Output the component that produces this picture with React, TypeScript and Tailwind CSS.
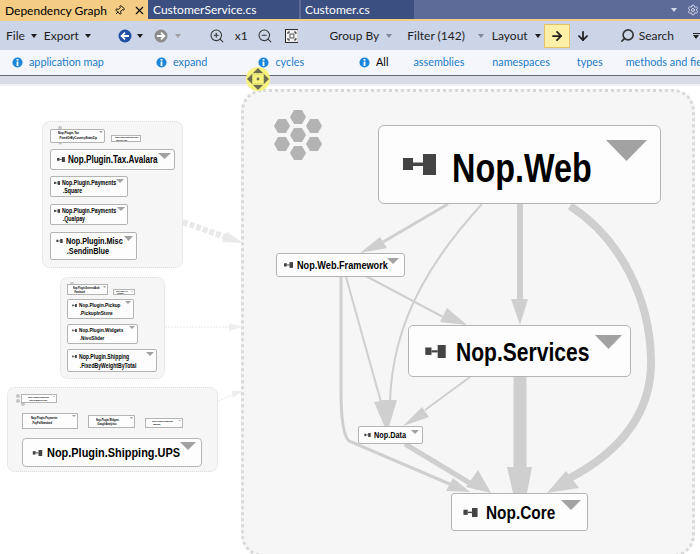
import React from 'react';
import { ArrowDown, ArrowRight, ZoomIn, ZoomOut, Search, Pin, X, Settings } from 'lucide-react';

const Caret = ({ className = 'border-t-[#1e1e1e]' }: { className?: string }) => (
  <span className={`inline-block h-0 w-0 border-x-[3.5px] border-t-[4px] border-x-transparent ${className}`} />
);

const Info = ({ className }: { className: string }) => (
  <svg viewBox="0 0 12 12" className={`h-[11px] w-[11px] shrink-0 ${className}`}>
    <circle cx="6" cy="6" r="5.5" fill="#1a86dc" />
    <rect x="5" y="2.2" width="2" height="1.8" fill="#fff" />
    <rect x="5" y="5" width="2" height="4.8" fill="#fff" />
  </svg>
);

const NavCircle = ({ fill, flip }: { fill: string; flip?: boolean }) => (
  <svg viewBox="0 0 14 14" className={`h-[14px] w-[14px] ${flip ? '-scale-x-100' : ''}`}>
    <circle cx="7" cy="7" r="6.5" fill={fill} />
    <path d="M11 7H4M7 3.6 3.6 7 7 10.4" fill="none" stroke="#fff" strokeWidth="1.8" />
  </svg>
);

const AsmIcon = ({ className }: { className: string }) => (
  <svg viewBox="0 0 33 21" className={`shrink-0 ${className}`}>
    <rect x="0" y="4" width="10" height="12" fill="#444" />
    <rect x="10" y="8.5" width="10" height="3.5" fill="#444" />
    <rect x="20" y="0" width="13" height="21" fill="#444" />
  </svg>
);

type NodeDef = {
  box: string;
  text: string;
  icon?: string;
  tri: string;
  lines: string[];
};

// positions on the graph canvas, in page pixels
const nodes: NodeDef[] = [
  { box: 'left-[378px] top-[125px] w-[283px] h-[79px] pl-[24px] gap-[16px] rounded-[6px]', text: 'text-[40px] leading-[46px] pt-[6px]', icon: 'w-[33px] h-[21px]', tri: 'right-[13px] top-[14px] w-[41px] h-[21px]', lines: ['Nop.Web'] },
  { box: 'left-[408px] top-[325px] w-[223px] h-[52px] pl-[16px] gap-[10px] rounded-[5px]', text: 'text-[26px] leading-[30px] pt-[2px]', icon: 'w-[21px] h-[13px]', tri: 'right-[8px] top-[9px] w-[27px] h-[14px]', lines: ['Nop.Services'] },
  { box: 'left-[451px] top-[493px] w-[137px] h-[38px] pl-[11px] gap-[8px] rounded-[3px]', text: 'text-[19px] leading-[22px] pt-[2px]', icon: 'w-[15px] h-[9px]', tri: 'right-[6px] top-[6px] w-[20px] h-[10px]', lines: ['Nop.Core'] },
  { box: 'left-[276px] top-[253px] w-[129px] h-[24px] pl-[7px] gap-[4px] rounded-[3px]', text: 'text-[11.3px] leading-[14px]', icon: 'w-[9px] h-[6px]', tri: 'right-[5px] top-[4px] w-[12px] h-[6px]', lines: ['Nop.Web.Framework'] },
  { box: 'left-[358px] top-[426px] w-[65px] h-[18px] pl-[5px] gap-[3px] rounded-[2px]', text: 'text-[9px] leading-[11px]', icon: 'w-[7px] h-[4px]', tri: 'right-[3px] top-[3px] w-[8px] h-[4px]', lines: ['Nop.Data'] },

  { box: 'left-[50px] top-[129px] w-[55px] h-[14px] pl-[7px] rounded-[2px]', text: 'text-[3.6px] leading-[5px]', tri: 'right-[1px] top-[1px] w-[4px] h-[2px]', lines: ['Nop.Plugin.Tax', '.FixedOrByCountryStateZip'] },
  { box: 'left-[111px] top-[135px] w-[30px] h-[7px] pl-[3px]', text: 'text-[2.4px] leading-[3px]', tri: 'right-[1px] top-[1px] w-[2px] h-[1px]', lines: ['Nop.Plugin.ExternalAuth', '.WeiXinAuth'] },
  { box: 'left-[50px] top-[149px] w-[125px] h-[21px] pl-[6px] gap-[3px] rounded-[3px]', text: 'text-[10px] leading-[11px]', icon: 'w-[8px] h-[5px]', tri: 'right-[3px] top-[3px] w-[13px] h-[6px]', lines: ['Nop.Plugin.Tax.Avalara'] },
  { box: 'left-[50px] top-[176px] w-[78px] h-[21px] pl-[3px] gap-[2px] rounded-[2px]', text: 'text-[6.5px] leading-[8px]', icon: 'w-[6px] h-[4px] -mt-[8px]', tri: 'right-[3px] top-[2px] w-[8px] h-[4px]', lines: ['Nop.Plugin.Payments', '.Square'] },
  { box: 'left-[50px] top-[204px] w-[78px] h-[21px] pl-[3px] gap-[2px] rounded-[2px]', text: 'text-[6.5px] leading-[8px]', icon: 'w-[6px] h-[4px] -mt-[8px]', tri: 'right-[2px] top-[2px] w-[8px] h-[4px]', lines: ['Nop.Plugin.Payments', '.Qualpay'] },
  { box: 'left-[50px] top-[232px] w-[87px] h-[28px] pl-[5px] gap-[3px] rounded-[2px]', text: 'text-[9px] leading-[10px]', icon: 'w-[7px] h-[4px] -mt-[10px]', tri: 'right-[3px] top-[3px] w-[9px] h-[5px]', lines: ['Nop.Plugin.Misc', '.SendinBlue'] },

  { box: 'left-[67px] top-[284px] w-[41px] h-[11px] pl-[5px]', text: 'text-[2.8px] leading-[4px]', tri: 'right-[1px] top-[1px] w-[3px] h-[2px]', lines: ['Nop.Plugin.ExternalAuth', '.Facebook'] },
  { box: 'left-[113px] top-[289px] w-[22px] h-[6px] pl-[2px]', text: 'text-[2px] leading-[2.5px]', tri: 'right-[1px] top-[1px] w-[2px] h-[1px]', lines: ['Nop.Plugin.Api', '.Sitemap'] },
  { box: 'left-[67px] top-[299px] w-[67px] h-[20px] pl-[4px] gap-[2px] rounded-[2px]', text: 'text-[5.8px] leading-[8px]', icon: 'w-[5px] h-[3px] -mt-[8px]', tri: 'right-[2px] top-[1px] w-[6px] h-[3px]', lines: ['Nop.Plugin.Pickup', '.PickupInStore'] },
  { box: 'left-[67px] top-[324px] w-[71px] h-[20px] pl-[4px] gap-[2px] rounded-[2px]', text: 'text-[5.8px] leading-[8px]', icon: 'w-[5px] h-[3px] -mt-[8px]', tri: 'right-[2px] top-[1px] w-[6px] h-[3px]', lines: ['Nop.Plugin.Widgets', '.NivoSlider'] },
  { box: 'left-[67px] top-[349px] w-[90px] h-[23px] pl-[4px] gap-[2px] rounded-[2px]', text: 'text-[6.3px] leading-[9px]', icon: 'w-[5px] h-[3px] -mt-[9px]', tri: 'right-[2px] top-[2px] w-[8px] h-[4px]', lines: ['Nop.Plugin.Shipping', '.FixedByWeightByTotal'] },

  { box: 'left-[21px] top-[394px] w-[36px] h-[9px] pl-[6px]', text: 'text-[2.5px] leading-[3px]', tri: 'right-[1px] top-[1px] w-[2px] h-[1px]', lines: ['Nop.Plugin.Payments', '.CheckMoneyOrder'] },
  { box: 'left-[22px] top-[413px] w-[56px] h-[16px] pl-[8px]', text: 'text-[3.2px] leading-[5px]', tri: 'right-[1px] top-[1px] w-[4px] h-[2px]', lines: ['Nop.Plugin.Payments', '.PayPalStandard'] },
  { box: 'left-[88px] top-[415px] w-[47px] h-[13px] pl-[7px]', text: 'text-[3px] leading-[4px]', tri: 'right-[1px] top-[1px] w-[3px] h-[2px]', lines: ['Nop.Plugin.Widgets', '.GoogleAnalytics'] },
  { box: 'left-[145px] top-[418px] w-[38px] h-[10px] pl-[6px]', text: 'text-[2.5px] leading-[3px]', tri: 'right-[1px] top-[1px] w-[3px] h-[1px]', lines: ['Nop.Plugin.Payments', '.Manual'] },
  { box: 'left-[22px] top-[438px] w-[180px] h-[29px] pl-[9px] gap-[4px] rounded-[4px]', text: 'text-[13.5px] leading-[16px]', icon: 'w-[11px] h-[6px]', tri: 'right-[5px] top-[3px] w-[16px] h-[8px]', lines: ['Nop.Plugin.Shipping.UPS'] },
];

const GraphNode = ({ n }: { n: NodeDef }) => (
  <div className={`absolute flex items-center border border-[#b4b4b4] bg-[#fdfdfd] ${n.box}`}>
    {n.icon && <AsmIcon className={n.icon} />}
    <div className={`origin-left scale-x-[.81] whitespace-pre font-bold text-black font-['Liberation_Sans',sans-serif] ${n.text}`}>
      {n.lines.map((l, i) => (
        <div key={l} className={i > 0 ? 'pl-[1px]' : ''}>{l}</div>
      ))}
    </div>
    <svg viewBox="0 0 10 5" preserveAspectRatio="none" className={`absolute ${n.tri}`}>
      <polygon points="0,0 10,0 5,5" fill="#a2a2a2" />
    </svg>
  </div>
);

const hexCenters = [
  [298, 117],
  [282, 126],
  [314, 126],
  [298, 135],
  [282, 144],
  [314, 144],
  [298, 153],
];

const Edges = () => (
  <svg viewBox="0 0 700 554" className="absolute inset-0 h-[554px] w-[700px]">
    <g fill="none" stroke="#cfcfcf">
      {/* from plugin groups */}
      <path d="M183 222 L228 238" stroke="#e9e9e9" strokeWidth="6" strokeDasharray="5 2" />
      <path d="M165 327 L230 327" stroke="#eeeeee" strokeWidth="1.5" strokeDasharray="2 1" />
      <path d="M218 401 L232 395" stroke="#eeeeee" strokeWidth="1.5" strokeDasharray="2 1" />

      <path d="M448 204 L383 242" strokeWidth="3" />
      <path d="M482 204 C440 250 391 315 390 405" strokeWidth="2" />
      <path d="M520 204 L520 302" strokeWidth="6" />
      <path d="M570 206 C620 238 650 298 651 360 C652 420 612 456 568 479" strokeWidth="8" />
      <path d="M520 377 L520 470" strokeWidth="13" />
      <path d="M364 275 L445 318" strokeWidth="2" />
      <path d="M346 277 L381 402" strokeWidth="2" />
      <path d="M341 277 L341 390 Q341 434 349 441 L452 485" strokeWidth="3" />
      <path d="M470 377 L425 410" strokeWidth="2" />
      <path d="M405 444 L478 488" strokeWidth="5" />
    </g>
    <g fill="#e9e9e9">
      <polygon points="243,243 222,242 227,232" />
      <polygon points="243,327 229,323 229,331" fill="#eeeeee" />
      <polygon points="243,391 231,391 233,398" fill="#eeeeee" />
    </g>
    <g fill="#cfcfcf">
      <polygon points="360,253 380,237 387,248" />
      <polygon points="511,299 528,299 520,325" />
      <polygon points="547,493 566,471 579,488" />
      <polygon points="507,467 532,467 527,493 513,493" />
      <polygon points="467,325 447,308 440,322" />
      <polygon points="386,430 374,402 392,400" />
      <polygon points="388,430 381,400 397,400" />
      <polygon points="403,426 422,407 429,417" />
      <polygon points="470,492 453,478 446,491" />
      <polygon points="491,493 478,470 466,487" />
    </g>
    {/* group glyph */}
    <g fill="#b3b3b3">
      {hexCenters.map(([x, y]) => (
        <polygon key={`${x}-${y}`} points={`${x - 8},${y} ${x - 4},${y - 7} ${x + 4},${y - 7} ${x + 8},${y} ${x + 4},${y + 7} ${x - 4},${y + 7}`} />
      ))}
    </g>
    <g fill="#c4c4c4">
      <circle cx="60" cy="128" r="2" />
      <circle cx="60" cy="143" r="1.6" />
      <circle cx="72" cy="284" r="2" />
      <circle cx="18" cy="396" r="2" />
      <circle cx="18" cy="401" r="2" />
      <circle cx="23" cy="404" r="2" />
    </g>
  </svg>
);

const groups = [
  'left-[42px] top-[121px] w-[141px] h-[147px]',
  'left-[60px] top-[277px] w-[105px] h-[102px]',
  'left-[7px] top-[387px] w-[211px] h-[85px]',
];

const PanControl = () => (
  <svg viewBox="0 0 24 24" className="absolute left-[246px] top-[67px] h-[24px] w-[24px]">
    <circle cx="12" cy="12" r="12" fill="#f6f27c" />
    <g fill="#6d6c55">
      <polygon points="12,1 17,6 7,6" />
      <polygon points="12,23 17,18 7,18" />
      <polygon points="1,12 6,7 6,17" />
      <polygon points="23,12 18,7 18,17" />
      <circle cx="12" cy="12" r="1.4" />
    </g>
    <rect x="6.5" y="7" width="11" height="10" fill="none" stroke="#c9c66a" strokeWidth="0.8" />
  </svg>
);

const linkClass = 'text-[#1b7cc8]';

export default function App() {
  return (
    <div className="relative flex h-[554px] w-[700px] flex-col overflow-hidden whitespace-nowrap bg-white text-[12px] text-[#1e1e1e] font-['Lato',sans-serif]">
      {/* document tabs */}
      <div className="flex h-[21px] shrink-0 items-start border-b-[2px] border-[#f5cc84] bg-[#5d6b99]">
        <div className="flex h-[21px] w-[148px] items-center bg-[#f5cc84] pl-[5px] text-black">
          <span className="w-[108px]">Dependency Graph</span>
          <Pin size={11} className="ml-[1px] rotate-45" />
          <X size={13} className="ml-[8px]" />
        </div>
        <div className="flex h-[19px] w-[151px] items-center bg-[#3b4f81] pl-[5px] text-white">CustomerService.cs</div>
        <div className="ml-[2px] flex h-[19px] w-[113px] items-center bg-[#3b4f81] pl-[4px] text-white">Customer.cs</div>
        <div className="ml-auto flex h-[19px] items-center">
          <Caret className="border-t-[#d5d9e8]" />
          <Settings size={12} className="ml-[10px] mr-[1px] text-[#d5d9e8]" />
        </div>
      </div>

      {/* toolbar */}
      <div className="flex h-[29px] shrink-0 items-center bg-[#ccd5e8] pl-[6px]">
        <span>File</span>
        <Caret className="ml-[6px] border-t-[#1e1e1e]" />
        <span className="ml-[7px]">Export</span>
        <Caret className="ml-[6px]" />
        <span className="ml-[27px] flex"><NavCircle fill="#1f4ea5" /></span>
        <Caret className="ml-[5px]" />
        <span className="ml-[11px] flex"><NavCircle fill="#8c8c8c" flip /></span>
        <Caret className="ml-[7px] border-t-[#a0a0a0]" />
        <ZoomIn size={16} className="ml-[28px] text-[#333]" strokeWidth={1.6} />
        <span className="ml-[10px]">x1</span>
        <ZoomOut size={16} className="ml-[9px] text-[#333]" strokeWidth={1.6} />
        <svg viewBox="0 0 14 14" className="ml-[12px] h-[14px] w-[14px]">
          <rect x="0.5" y="0.5" width="13" height="13" fill="#f5f5f5" stroke="#222" />
          <path d="M3 5V3H5M9 3H11V5M11 9V11H9M5 11H3V9" fill="none" stroke="#222" />
          <rect x="5" y="5" width="4" height="4" fill="none" stroke="#555" />
        </svg>
        <span className="ml-[31px]">Group By</span>
        <Caret className="ml-[7px] border-t-[#7f8798]" />
        <span className="ml-[15px]">Filter (142)</span>
        <Caret className="ml-[13px] border-t-[#7f8798]" />
        <span className="ml-[8px]">Layout</span>
        <Caret className="ml-[7px]" />
        <div className="ml-[3px] flex h-[24px] w-[26px] shrink-0 items-center justify-center border border-[#e5c365] bg-[#fdeea8]">
          <ArrowRight size={14} strokeWidth={3} />
        </div>
        <ArrowDown size={14} strokeWidth={3} className="ml-[6px] shrink-0" />
        <Search size={15} strokeWidth={2.6} className="ml-[30px] shrink-0 -scale-x-100 text-[#333]" />
        <span className="ml-[4px]">Search</span>
        <div className="ml-[19px] flex flex-col items-center gap-[1px]">
          <span className="h-[1px] w-[7px] bg-[#1e1e1e]" />
          <Caret />
        </div>
      </div>

      {/* level links */}
      <div className="flex h-[25px] shrink-0 items-center overflow-hidden bg-[#f5f6fb] pl-[12px] text-[10.8px]">
        <Info className="" />
        <span className={`ml-[6px] ${linkClass}`}>application map</span>
        <Info className="ml-[52px]" />
        <span className={`ml-[6px] ${linkClass}`}>expand</span>
        <Info className="ml-[51px]" />
        <span className={`ml-[6px] ${linkClass}`}>cycles</span>
        <Info className="ml-[55px]" />
        <span className="ml-[6px] text-black">All</span>
        <span className={`ml-[25px] ${linkClass}`}>assemblies</span>
        <span className={`ml-[28px] ${linkClass}`}>namespaces</span>
        <span className={`ml-[27px] ${linkClass}`}>types</span>
        <span className={`ml-[23px] ${linkClass}`}>methods and fields</span>
      </div>

      {/* divider and graph background */}
      <div className="h-[9px] shrink-0 border-t border-[#6c6c74] bg-[#d9dbe6]" />
      <div className="flex-1 border-t-[2px] border-[#f0f0f5] bg-white" />

      {/* graph canvas */}
      <div className="absolute left-[241px] top-[89px] h-[468px] w-[454px] rounded-[22px] border-[3px] border-dotted border-[#d9d9d9] bg-[#f6f6f6]" />
      {groups.map((g) => (
        <div key={g} className={`absolute rounded-[8px] border border-dotted border-[#dcdcdc] bg-[#f6f6f6] ${g}`} />
      ))}
      <Edges />
      {nodes.map((n) => (
        <GraphNode key={n.lines.join('')} n={n} />
      ))}
      <PanControl />
    </div>
  );
}
